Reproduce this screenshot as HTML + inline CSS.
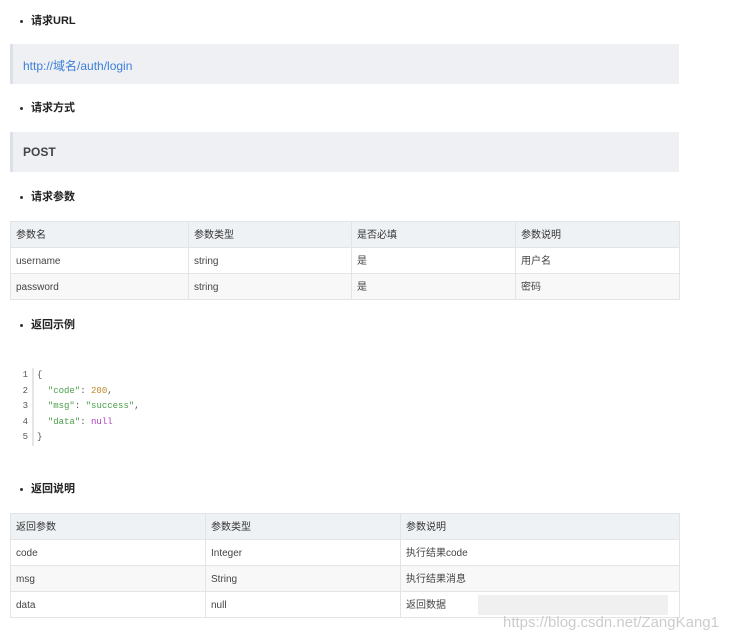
<!DOCTYPE html>
<html><head><meta charset="utf-8"><style>
body{margin:0;width:740px;height:640px;background:#fff;font-family:"Liberation Sans","Noto Sans CJK SC",sans-serif;color:#333;position:relative;overflow:hidden}
.a{position:absolute}
.li{position:absolute;left:31px;font-size:11px;font-weight:bold;color:#222;line-height:14px}
.li:before{content:"";position:absolute;left:-11px;top:6px;width:3px;height:3px;border-radius:50%;background:#333}
.blk{position:absolute;left:10px;width:669px;height:40px;background:#eef0f4;border-left:3px solid #dde0e6;box-sizing:border-box}
table{position:absolute;left:10px;width:670px;border-collapse:collapse;font-size:10px;color:#444}
td{border:1px solid #e2e4e8;padding:0 5px;height:25px;white-space:nowrap}
td span{display:block;height:25px;line-height:28px;overflow:hidden}
tr.h td{background:#eff2f5;color:#333}
tr.g td{background:#f8f8f8}
.code{position:absolute;left:18px;top:368px;font-family:"Liberation Mono",monospace;font-size:9px;line-height:15.5px}
.ln{position:absolute;left:0;width:10px;text-align:right;color:#555}
.cl{position:absolute;left:19px;white-space:pre;color:#555}
</style></head><body>
<div class="li" style="top:14px">请求URL</div>
<div class="blk" style="top:44px"><span class="a" style="left:10px;top:13px;font-size:12px;color:#3c7fd8">http://域名/auth/login</span></div>
<div class="li" style="top:101px">请求方式</div>
<div class="blk" style="top:132px"><span class="a" style="left:10px;top:13px;font-size:12px;font-weight:bold;color:#444">POST</span></div>
<div class="li" style="top:190px">请求参数</div>
<table style="top:221px">
<tr class="h"><td style="width:167px"><span>参数名</span></td><td style="width:152px"><span>参数类型</span></td><td style="width:153px"><span>是否必填</span></td><td><span>参数说明</span></td></tr>
<tr><td><span>username</span></td><td><span>string</span></td><td><span>是</span></td><td><span>用户名</span></td></tr>
<tr class="g"><td><span>password</span></td><td><span>string</span></td><td><span>是</span></td><td><span>密码</span></td></tr>
</table>
<div class="li" style="top:318px">返回示例</div>
<div class="code">
<div class="a" style="left:14px;top:0;width:2px;height:78px;background:#e5e5e5"></div>
<div class="ln" style="top:0">1</div><div class="cl" style="top:0">{</div>
<div class="ln" style="top:15.5px">2</div><div class="cl" style="top:15.5px">  <span style="color:#4a9e4a">"code"</span>: <span style="color:#c08a2a">200</span>,</div>
<div class="ln" style="top:31px">3</div><div class="cl" style="top:31px">  <span style="color:#4a9e4a">"msg"</span>: <span style="color:#4a9e4a">"success"</span>,</div>
<div class="ln" style="top:46.5px">4</div><div class="cl" style="top:46.5px">  <span style="color:#4a9e4a">"data"</span>: <span style="color:#b040c0">null</span></div>
<div class="ln" style="top:62px">5</div><div class="cl" style="top:62px">}</div>
</div>
<div class="li" style="top:482px">返回说明</div>
<table style="top:513px">
<tr class="h"><td style="width:184px"><span>返回参数</span></td><td style="width:184px"><span>参数类型</span></td><td><span>参数说明</span></td></tr>
<tr><td><span>code</span></td><td><span>Integer</span></td><td><span>执行结果code</span></td></tr>
<tr class="g"><td><span>msg</span></td><td><span>String</span></td><td><span>执行结果消息</span></td></tr>
<tr><td><span>data</span></td><td><span>null</span></td><td><span>返回数据</span></td></tr>
</table>
<div class="a" style="left:478px;top:595px;width:190px;height:20px;background:#ececec;opacity:.8"></div>
<div class="a" style="left:503px;top:614px;font-size:15px;color:#ccc">https://blog.csdn.net/ZangKang1</div>
</body></html>
